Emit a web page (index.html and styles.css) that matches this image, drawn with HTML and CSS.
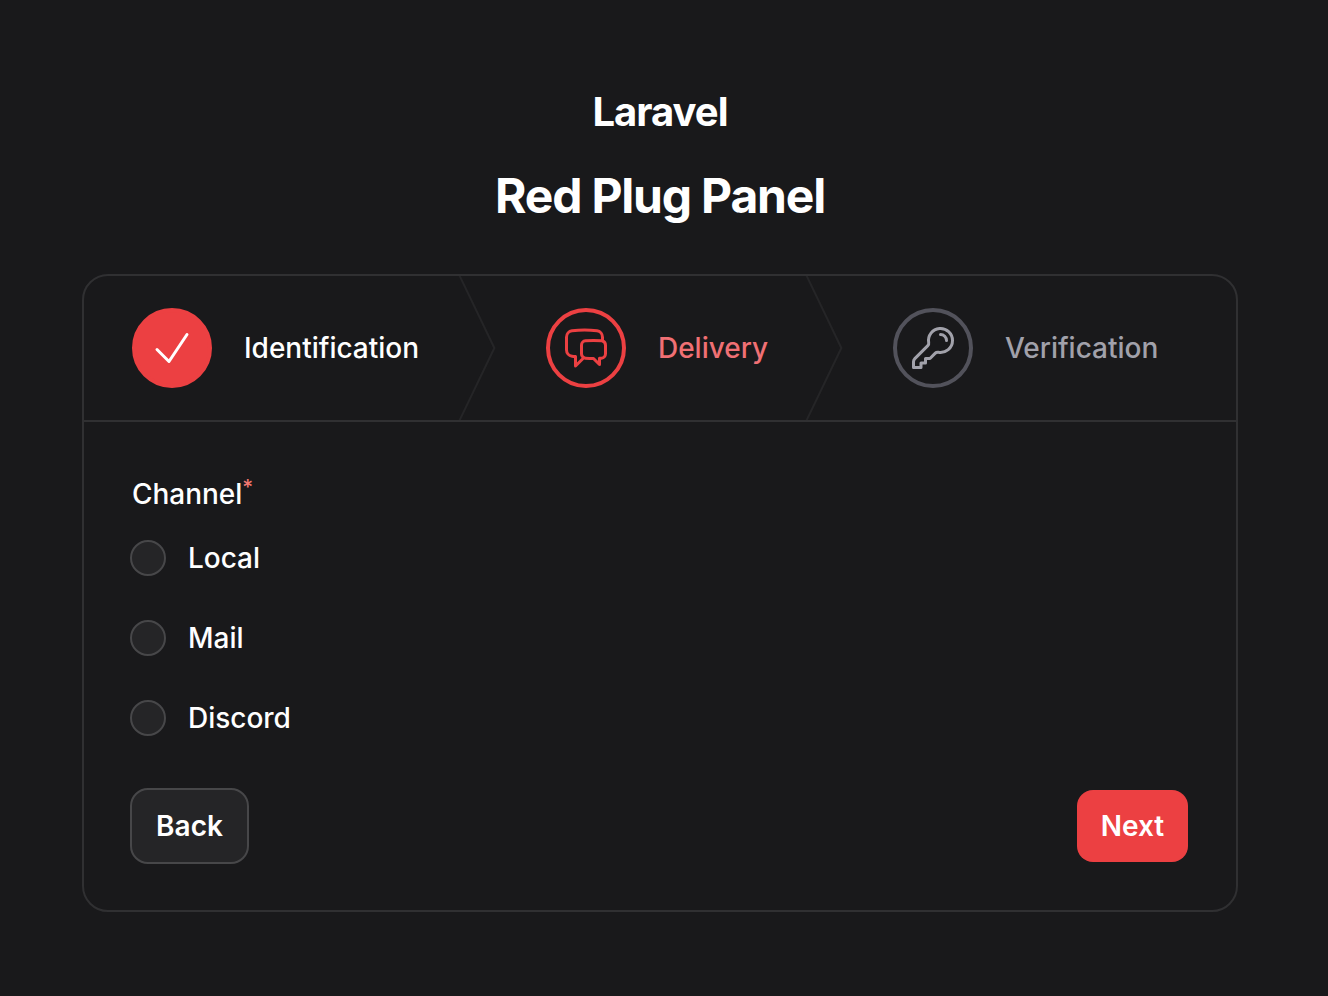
FILE: index.html
```html
<!DOCTYPE html>
<html lang="en">
<head>
<meta charset="utf-8">
<title>Red Plug Panel</title>
<link rel="stylesheet" href="styles.css">
</head>
<body>
<main class="page">
  <header class="head">
    <div class="brand">Laravel</div>
    <h1 class="title">Red Plug Panel</h1>
  </header>
  <form class="wizard">
    <ol class="steps">
      <li class="step step-done">
        <span class="step-icon"><svg class="icon" viewBox="0 0 24 24"><path d="m4.5 12.75 6 6 9-13.5"/></svg></span>
        <span class="step-label">Identification</span>
        <svg class="chevron" viewBox="0 0 22 80" preserveAspectRatio="none"><path d="M0 -2L20 40L0 82" vector-effect="non-scaling-stroke"/></svg>
      </li>
      <li class="step step-active">
        <span class="step-icon"><svg class="icon" viewBox="0 0 24 24"><path d="M20.25 8.511c.884.284 1.5 1.128 1.5 2.097v4.286c0 1.136-.847 2.1-1.98 2.193-.34.027-.68.052-1.02.072v3.091l-3-3c-1.354 0-2.694-.055-4.02-.163a2.115 2.115 0 0 1-.825-.242m9.345-8.334a2.126 2.126 0 0 0-.476-.095 48.64 48.64 0 0 0-8.048 0c-1.131.094-1.976 1.057-1.976 2.192v4.286c0 .837.46 1.58 1.155 1.951m9.345-8.334V6.637c0-1.621-1.152-3.026-2.76-3.235A48.455 48.455 0 0 0 11.25 3c-2.115 0-4.198.137-6.24.402-1.608.209-2.76 1.614-2.76 3.235v6.226c0 1.621 1.152 3.026 2.76 3.235.577.075 1.157.14 1.74.194V21l4.155-4.155"/></svg></span>
        <span class="step-label">Delivery</span>
        <svg class="chevron" viewBox="0 0 22 80" preserveAspectRatio="none"><path d="M0 -2L20 40L0 82" vector-effect="non-scaling-stroke"/></svg>
      </li>
      <li class="step">
        <span class="step-icon"><svg class="icon" viewBox="0 0 24 24"><path d="M15.75 5.25a3 3 0 0 1 3 3m3 0a6 6 0 0 1-7.029 5.912c-.563-.097-1.159.026-1.563.43L10.5 17.25H8.25v2.25H6v2.25H2.25v-2.818c0-.597.237-1.17.659-1.591l6.499-6.499c.404-.404.527-1 .43-1.563A6 6 0 1 1 21.75 8.25Z"/></svg></span>
        <span class="step-label">Verification</span>
      </li>
    </ol>
    <div class="content">
      <div class="legend">Channel<sup class="required">*</sup></div>
      <div class="options">
        <label class="option"><input class="radio" type="radio" name="channel"><span>Local</span></label>
        <label class="option"><input class="radio" type="radio" name="channel"><span>Mail</span></label>
        <label class="option"><input class="radio" type="radio" name="channel"><span>Discord</span></label>
      </div>
      <div class="actions">
        <button class="btn btn-back" type="button">Back</button>
        <button class="btn btn-next" type="button">Next</button>
      </div>
    </div>
  </form>
</main>
</body>
</html>
```
FILE: styles.css
```css
* { box-sizing: border-box; }

body {
  margin: 0;
  min-height: 996px;
  background: #19191b;
  color: #fff;
  font-family: Inter, "Liberation Sans", sans-serif;
  font-size: 28px;
  line-height: 48px;
  font-weight: 500;
  letter-spacing: -0.02px;
}

.page {
  width: 1156px;
  margin-left: 82px;
  padding-top: 92px;
}

.head {
  display: flex;
  flex-direction: column;
  align-items: center;
  gap: 32px;
  font-weight: 700;
}

.brand { font-size: 40px; line-height: 40px; letter-spacing: -0.025em; }
.title { margin: 0; font-size: 48px; line-height: 64px; font-weight: 700; letter-spacing: -0.025em; }

.wizard {
  height: 638px;
  margin-top: 46px;
  border: 2px solid #303032;
  border-radius: 26px;
}

.steps {
  display: grid;
  grid-template-columns: 414px 347px 391px;
  height: 146px;
  margin: 0;
  padding: 0;
  list-style: none;
  border-bottom: 2px solid #303032;
}

.step {
  position: relative;
  display: flex;
  align-items: center;
  gap: 32px;
  padding-left: 48px;
  color: #a1a1aa;
}

.step-icon {
  display: flex;
  align-items: center;
  justify-content: center;
  width: 80px;
  height: 80px;
  border: 4px solid #52525b;
  border-radius: 50%;
}

.icon {
  width: 48px;
  height: 48px;
  fill: none;
  stroke: currentColor;
  stroke-width: 1.5;
  stroke-linecap: round;
  stroke-linejoin: round;
}

.step-done { color: #fff; }
.step-done .step-icon { background: #ec4042; border-color: #ec4042; }
.step-active { color: #f07074; }
.step-active .step-icon { color: #ec4042; border-color: #ec4042; }

.chevron {
  position: absolute;
  top: 0;
  right: 0;
  width: 40px;
  height: 100%;
  fill: none;
  stroke: #252527;
  stroke-width: 2;
  stroke-linejoin: round;
}

.content { padding: 48px; }
.legend { display: flex; }

.required {
  color: #f27870;
  font-size: 21px;
  line-height: 36px;
}

.options {
  display: flex;
  flex-direction: column;
  gap: 32px;
  margin-top: 16px;
}

.option {
  display: flex;
  align-items: center;
  gap: 22px;
  margin-left: -2px;
}

.radio {
  appearance: none;
  width: 36px;
  height: 36px;
  margin: 0;
  background: #252527;
  border: 2px solid #474749;
  border-radius: 50%;
}

.actions {
  display: flex;
  align-items: center;
  justify-content: space-between;
  margin: 46px 0 0 -2px;
}

.btn {
  border: 0;
  padding: 0;
  color: #fff;
  font: 600 28px/48px Inter, "Liberation Sans", sans-serif;
}

.btn-back {
  width: 119px;
  height: 76px;
  background: #252527;
  border: 2px solid #474749;
  border-radius: 18px;
}

.btn-next {
  width: 111px;
  height: 72px;
  background: #ec4042;
  border-radius: 16px;
}
```
